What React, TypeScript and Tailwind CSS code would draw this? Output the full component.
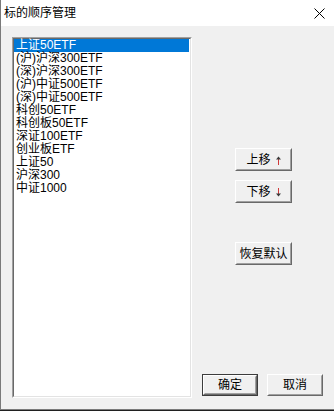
const items = [
  "上证50ETF",
  "(沪)沪深300ETF",
  "(深)沪深300ETF",
  "(沪)中证500ETF",
  "(深)中证500ETF",
  "科创50ETF",
  "科创板50ETF",
  "深证100ETF",
  "创业板ETF",
  "上证50",
  "沪深300",
  "中证1000",
];

const font = { fontFamily: '"Liberation Sans", "Noto Sans CJK SC", sans-serif' };

function Btn({ children, isDefault = false, className = "" }: { children: React.ReactNode; isDefault?: boolean; className?: string }) {
  return (
    <div className={`${isDefault ? "border border-[#3c3c3c]" : ""} ${className}`}>
      <div className="h-full border border-t-white border-l-white border-r-[#696969] border-b-[#696969]">
        <div className="flex h-full items-center justify-center border border-t-[#f0f0f0] border-l-[#f0f0f0] border-r-[#a0a0a0] border-b-[#a0a0a0] bg-[#f0f0f0] text-[12px] text-black">
          {children}
        </div>
      </div>
    </div>
  );
}

function Arrow({ down = false }: { down?: boolean }) {
  return (
    <svg width="5" height="9" viewBox="0 0 5 9" className={`ml-[5px] mt-[2px] ${down ? "rotate-180" : ""}`}>
      <path d="M2.5 1 V9" stroke="#d03a3a" strokeWidth="1" />
      <path d="M0 3.5 L2.5 0.5 L5 3.5 Z" fill="#3a3a3a" />
    </svg>
  );
}

export default function App() {
  return (
    <div className="h-[411px] w-[334px] bg-[#202020]" style={font}>
      <div className="flex h-[410px] w-[334px] flex-col border-b border-l border-[#7a7a7a] bg-[#f0f0f0]">
        <div className="flex h-[26px] items-center justify-between bg-white pl-[3px] pr-[9px]">
          <span className="text-[12px] leading-none text-black">标的顺序管理</span>
          <svg width="11" height="11" viewBox="0 0 11 11" className="text-black">
            <path d="M0.5 0.5 L10.5 10.5 M10.5 0.5 L0.5 10.5" stroke="currentColor" strokeWidth="1" />
          </svg>
        </div>

        <div className="flex pl-[11px] pt-[11px]">
          <div className="h-[361px] w-[180px] border border-t-[#a0a0a0] border-l-[#a0a0a0] border-r-white border-b-white">
            <div className="h-full border border-t-[#696969] border-l-[#696969] border-r-[#e3e3e3] border-b-[#e3e3e3] bg-white pr-[1px]">
              {items.map((it, i) => (
                <div
                  key={it}
                  className={`h-[13px] pl-[2px] text-[12px] leading-[13px] whitespace-nowrap ${i === 0 ? "bg-[#0078d7] text-white" : "text-black"}`}
                >
                  {it}
                </div>
              ))}
            </div>
          </div>

          <div className="flex h-[360px] flex-col">
            <div className="ml-[43px] mt-[111px] flex flex-col">
              <Btn className="h-[23px] w-[57px]">
                <span>上移</span>
                <Arrow />
              </Btn>
              <Btn className="mt-[9px] h-[23px] w-[57px]">
                <span>下移</span>
                <Arrow down />
              </Btn>
              <Btn className="mt-[39px] h-[23px] w-[57px]">恢复默认</Btn>
            </div>
            <div className="mb-[1px] ml-[10px] mt-auto flex gap-[9px]">
              <Btn isDefault className="h-[22px] w-[56px]">确定</Btn>
              <Btn className="h-[22px] w-[56px]">取消</Btn>
            </div>
          </div>
        </div>
      </div>
    </div>
  );
}
